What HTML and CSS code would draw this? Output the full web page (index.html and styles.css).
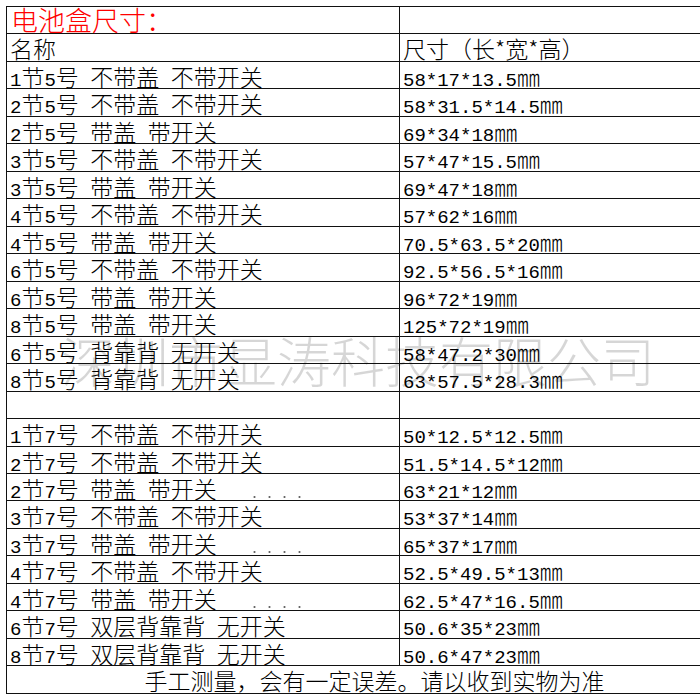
FILE: index.html
```html
<!DOCTYPE html>
<html lang="zh-CN">
<head>
<meta charset="utf-8">
<title>电池盒尺寸</title>
<link rel="stylesheet" href="styles.css">
</head>
<body>
<div class="sheet">
  <div class="c title">电池盒尺寸：</div><div class="c"></div>
  <div class="c">名称</div><div class="c">尺寸（长*宽*高）</div>

  <div class="c"><span class="n">1</span>节<span class="n">5</span>号&ensp;不带盖&ensp;不带开关</div><div class="c"><span class="n">58*17*13.5</span>㎜</div>
  <div class="c"><span class="n">2</span>节<span class="n">5</span>号&ensp;不带盖&ensp;不带开关</div><div class="c"><span class="n">58*31.5*14.5</span>㎜</div>
  <div class="c"><span class="n">2</span>节<span class="n">5</span>号&ensp;带盖&ensp;带开关</div><div class="c"><span class="n">69*34*18</span>㎜</div>
  <div class="c"><span class="n">3</span>节<span class="n">5</span>号&ensp;不带盖&ensp;不带开关</div><div class="c"><span class="n">57*47*15.5</span>㎜</div>
  <div class="c"><span class="n">3</span>节<span class="n">5</span>号&ensp;带盖&ensp;带开关</div><div class="c"><span class="n">69*47*18</span>㎜</div>
  <div class="c"><span class="n">4</span>节<span class="n">5</span>号&ensp;不带盖&ensp;不带开关</div><div class="c"><span class="n">57*62*16</span>㎜</div>
  <div class="c"><span class="n">4</span>节<span class="n">5</span>号&ensp;带盖&ensp;带开关</div><div class="c"><span class="n">70.5*63.5*20</span>㎜</div>
  <div class="c"><span class="n">6</span>节<span class="n">5</span>号&ensp;不带盖&ensp;不带开关</div><div class="c"><span class="n">92.5*56.5*16</span>㎜</div>
  <div class="c"><span class="n">6</span>节<span class="n">5</span>号&ensp;带盖&ensp;带开关</div><div class="c"><span class="n">96*72*19</span>㎜</div>
  <div class="c"><span class="n">8</span>节<span class="n">5</span>号&ensp;带盖&ensp;带开关</div><div class="c"><span class="n">125*72*19</span>㎜</div>
  <div class="c"><span class="n">6</span>节<span class="n">5</span>号&ensp;背靠背&ensp;无开关</div><div class="c"><span class="n">58*47.2*30</span>㎜</div>
  <div class="c"><span class="n">8</span>节<span class="n">5</span>号&ensp;背靠背&ensp;无开关</div><div class="c"><span class="n">63*57.5*28.3</span>㎜</div>

  <div class="c"></div><div class="c"></div>

  <div class="c"><span class="n">1</span>节<span class="n">7</span>号&ensp;不带盖&ensp;不带开关</div><div class="c"><span class="n">50*12.5*12.5</span>㎜</div>
  <div class="c"><span class="n">2</span>节<span class="n">7</span>号&ensp;不带盖&ensp;不带开关</div><div class="c"><span class="n">51.5*14.5*12</span>㎜</div>
  <div class="c"><span class="n">2</span>节<span class="n">7</span>号&ensp;带盖&ensp;带开关<span class="dots"></span></div><div class="c"><span class="n">63*21*12</span>㎜</div>
  <div class="c"><span class="n">3</span>节<span class="n">7</span>号&ensp;不带盖&ensp;不带开关</div><div class="c"><span class="n">53*37*14</span>㎜</div>
  <div class="c"><span class="n">3</span>节<span class="n">7</span>号&ensp;带盖&ensp;带开关<span class="dots"></span></div><div class="c"><span class="n">65*37*17</span>㎜</div>
  <div class="c"><span class="n">4</span>节<span class="n">7</span>号&ensp;不带盖&ensp;不带开关</div><div class="c"><span class="n">52.5*49.5*13</span>㎜</div>
  <div class="c"><span class="n">4</span>节<span class="n">7</span>号&ensp;带盖&ensp;带开关<span class="dots"></span></div><div class="c"><span class="n">62.5*47*16.5</span>㎜</div>
  <div class="c"><span class="n">6</span>节<span class="n">7</span>号&ensp;双层背靠背&ensp;无开关</div><div class="c"><span class="n">50.6*35*23</span>㎜</div>
  <div class="c"><span class="n">8</span>节<span class="n">7</span>号&ensp;双层背靠背&ensp;无开关</div><div class="c"><span class="n">50.6*47*23</span>㎜</div>

  <div class="c foot">手工测量，会有一定误差。请以收到实物为准</div>

  <div class="wm">深圳市显涛科技有限公司</div>
</div>
</body>
</html>
```

FILE: styles.css
```css
html, body {
  margin: 0;
  padding: 0;
  background: #fff;
  overflow: hidden;
}

.sheet {
  position: relative;
  margin: 6px 0 0 6px;
  width: 736px;
  display: grid;
  grid-template-columns: 393px 343px;
  grid-auto-rows: 27.48px;
  border-top: 1px solid #111;
  border-left: 1px solid #111;
  font-family: "Noto Sans CJK SC", sans-serif;
  font-weight: 300;
  font-size: 23px;
  color: #000;
}

.c {
  box-sizing: border-box;
  border-right: 1px solid #111;
  border-bottom: 1px solid #111;
  padding: 1px 0 0 3px;
  line-height: 26px;
  white-space: nowrap;
}

.title {
  color: #f00;
  font-size: 27px;
  padding-top: 0;
  padding-left: 4px;
}

.n {
  font-family: "Liberation Mono", monospace;
  font-size: 19px;
  font-weight: 400;
}

.foot {
  grid-column: 1 / span 2;
  text-align: center;
  font-size: 23px;
  padding-left: 0;
}

.dots {
  display: inline-block;
  width: 60px;
  height: 2px;
  margin-left: 30px;
  background: radial-gradient(circle, #666 0.8px, transparent 1.3px) 0 0 / 15px 2px repeat-x;
}

.wm {
  position: absolute;
  left: 54px;
  top: 326px;
  font-size: 54px;
  line-height: 1;
  font-weight: 300;
  color: rgba(0, 0, 0, 0.16);
  white-space: nowrap;
  pointer-events: none;
}
```
